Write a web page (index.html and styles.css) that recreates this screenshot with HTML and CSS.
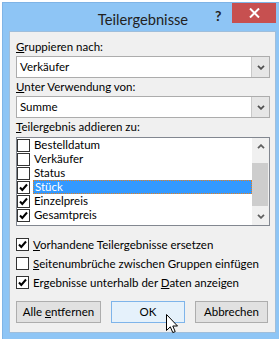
FILE: index.html
```html
<!DOCTYPE html>
<html lang="de">
<head>
<meta charset="utf-8">
<title>Teilergebnisse</title>
<link rel="stylesheet" href="styles.css">
</head>
<body>
<div class="window">
  <div class="titlebar">
    <span class="title">Teilergebnisse</span>
    <span class="help">?</span>
    <span class="close"><svg width="11" height="10" viewBox="0 0 11 10"><path d="M1 0.5 L10 9.5 M10 0.5 L1 9.5" stroke="#fff" stroke-width="2" fill="none"/></svg></span>
  </div>
  <div class="client">
    <div class="lbl lbl-first"><u>G</u>ruppieren nach:</div>
    <div class="combo">
      <span class="combo-val">Verkäufer</span>
      <span class="combo-btn"><svg width="8" height="5" viewBox="0 0 8 5"><path d="M1 0.8 L4 3.8 L7 0.8" stroke="#505050" stroke-width="1.8" fill="none"/></svg></span>
    </div>
    <div class="lbl"><u>U</u>nter Verwendung von:</div>
    <div class="combo">
      <span class="combo-val">Summe</span>
      <span class="combo-btn"><svg width="8" height="5" viewBox="0 0 8 5"><path d="M1 0.8 L4 3.8 L7 0.8" stroke="#505050" stroke-width="1.8" fill="none"/></svg></span>
    </div>
    <div class="lbl"><u>T</u>eilergebnis addieren zu:</div>
    <div class="listbox">
      <div class="items">
        <div class="item"><span class="cb"></span><span class="txt">Bestelldatum</span></div>
        <div class="item"><span class="cb"></span><span class="txt">Verkäufer</span></div>
        <div class="item"><span class="cb"></span><span class="txt">Status</span></div>
        <div class="item"><span class="cb"><svg width="11" height="11" viewBox="0 0 11 11"><path d="M2 5.5 L4.3 8 L9 2.5" stroke="#000" stroke-width="2" fill="none"/></svg></span><span class="txt sel">Stück</span></div>
        <div class="item"><span class="cb"><svg width="11" height="11" viewBox="0 0 11 11"><path d="M2 5.5 L4.3 8 L9 2.5" stroke="#000" stroke-width="2" fill="none"/></svg></span><span class="txt">Einzelpreis</span></div>
        <div class="item"><span class="cb"><svg width="11" height="11" viewBox="0 0 11 11"><path d="M2 5.5 L4.3 8 L9 2.5" stroke="#000" stroke-width="2" fill="none"/></svg></span><span class="txt">Gesamtpreis</span></div>
      </div>
      <div class="scrollbar">
        <div class="sb-arrow"><svg width="8" height="5" viewBox="0 0 8 5"><path d="M1 4.2 L4 1.2 L7 4.2" stroke="#606060" stroke-width="1.8" fill="none"/></svg></div>
        <div class="sb-track"><div class="sb-thumb"></div></div>
        <div class="sb-arrow"><svg width="8" height="5" viewBox="0 0 8 5"><path d="M1 0.8 L4 3.8 L7 0.8" stroke="#606060" stroke-width="1.8" fill="none"/></svg></div>
      </div>
    </div>
    <div class="options">
      <div class="opt"><span class="cb"><svg width="11" height="11" viewBox="0 0 11 11"><path d="M2 5.5 L4.3 8 L9 2.5" stroke="#000" stroke-width="2" fill="none"/></svg></span><span><u>V</u>orhandene Teilergebnisse ersetzen</span></div>
      <div class="opt"><span class="cb"></span><span><u>S</u>eitenumbrüche zwischen Gruppen einfügen</span></div>
      <div class="opt"><span class="cb"><svg width="11" height="11" viewBox="0 0 11 11"><path d="M2 5.5 L4.3 8 L9 2.5" stroke="#000" stroke-width="2" fill="none"/></svg></span><span>Ergebnisse unterhalb der <u>D</u>aten anzeigen</span></div>
    </div>
    <div class="buttons">
      <span class="button b-remove"><span>Alle <u>e</u>ntfernen</span></span>
      <span class="button b-ok"><span>OK</span></span>
      <span class="button b-cancel"><span>Abbrechen</span></span>
    </div>
  </div>
</div>
<svg class="cursor" width="13" height="20" viewBox="0 0 13 20"><path d="M0.5 0.5 L0.5 16.5 L4.3 12.8 L6.8 18.6 L9.2 17.6 L6.8 12 L11.5 12 Z" fill="#fff" stroke="#000" stroke-width="1" stroke-linejoin="miter"/></svg>
</body>
</html>
```
FILE: styles.css
```css
html, body {
  margin: 0;
  padding: 0;
}
body {
  width: 279px;
  height: 339px;
  overflow: hidden;
  background: #fff;
  position: relative;
  font-family: Lato, "Liberation Sans", sans-serif;
  font-size: 11.5px;
  color: #000;
}
u {
  text-decoration: underline;
  text-underline-offset: 1px;
}
.window {
  margin: 2px 0 0 2px;
  width: 281px;
  height: 345px;
  background: #8ec5f5;
  box-sizing: border-box;
  border-left: 1px solid #7fb4e6;
  border-top: 1px solid #7fb4e6;
}
.titlebar {
  position: relative;
  height: 28px;
  text-align: center;
}
.title {
  display: block;
  padding-top: 6px;
  font-size: 14.7px;
  line-height: 20px;
  color: #222;
}
.help {
  position: absolute;
  left: 212px;
  top: 4px;
  font-weight: bold;
  font-size: 14px;
  line-height: 18px;
  color: #222;
}
.close {
  position: absolute;
  left: 229px;
  top: 0;
  width: 44px;
  height: 20px;
  background: #c75050;
  display: flex;
  align-items: center;
  justify-content: center;
}
.client {
  margin: 0 0 0 6px;
  width: 267px;
  height: 302px;
  box-sizing: border-box;
  background: #f0f0f0;
  border: 1px solid #9fbedb;
  padding: 7px 5px 0 6px;
  display: flex;
  flex-direction: column;
}
.lbl {
  height: 16px;
  line-height: 16px;
  margin-top: 1px;
  margin-bottom: 1px;
  white-space: nowrap;
}
.lbl-first {
  margin-top: 0;
}
.combo {
  height: 22px;
  box-sizing: border-box;
  border: 1px solid #acacac;
  background: #fff;
  display: flex;
  align-items: stretch;
}
.combo-val {
  flex: 1;
  padding-left: 3px;
  line-height: 20px;
}
.combo-btn {
  width: 17px;
  background: #e6e6e6;
  border-left: 1px solid #c9c9c9;
  display: flex;
  align-items: center;
  justify-content: center;
}
.listbox {
  margin-top: 1px;
  height: 89px;
  box-sizing: border-box;
  border: 1px solid #828790;
  background: #fff;
  display: flex;
}
.items {
  flex: 1;
  display: flex;
  flex-direction: column;
}
.item {
  height: 14px;
  display: flex;
  align-items: center;
}
.cb {
  width: 13px;
  height: 13px;
  box-sizing: border-box;
  border: 1px solid #333;
  background: #fff;
  display: flex;
  align-items: center;
  justify-content: center;
  flex: none;
}
.txt {
  margin-left: 3px;
  flex: 1;
  height: 14px;
  line-height: 14px;
  padding-left: 1px;
  box-sizing: border-box;
  white-space: nowrap;
}
.sel {
  background: #3399ff;
  color: #fff;
  border: 1px dotted #e8801c;
  line-height: 12px;
}
.scrollbar {
  width: 17px;
  background: #f0f0f0;
  display: flex;
  flex-direction: column;
}
.sb-arrow {
  height: 17px;
  display: flex;
  align-items: center;
  justify-content: center;
}
.sb-track {
  flex: 1;
  padding-top: 8px;
}
.sb-thumb {
  height: 43px;
  margin: 0 1px 0 0;
  background: #cdcdcd;
}
.options {
  margin-top: 9px;
  display: flex;
  flex-direction: column;
}
.opt {
  height: 19px;
  display: flex;
  align-items: center;
  gap: 4px;
  white-space: nowrap;
}
.buttons {
  margin-top: 9px;
  display: flex;
  gap: 10px;
}
.button {
  height: 22px;
  box-sizing: border-box;
  border: 1px solid #adadad;
  background: #e1e1e1;
  display: flex;
  align-items: center;
  justify-content: center;
  line-height: 20px;
  white-space: nowrap;
}
.b-remove {
  width: 85px;
}
.b-ok {
  width: 74px;
  background: #e5f1fb;
  border-color: #7eb4ea;
}
.b-cancel {
  width: 73px;
}
.cursor {
  position: absolute;
  left: 166px;
  top: 314px;
}
```
